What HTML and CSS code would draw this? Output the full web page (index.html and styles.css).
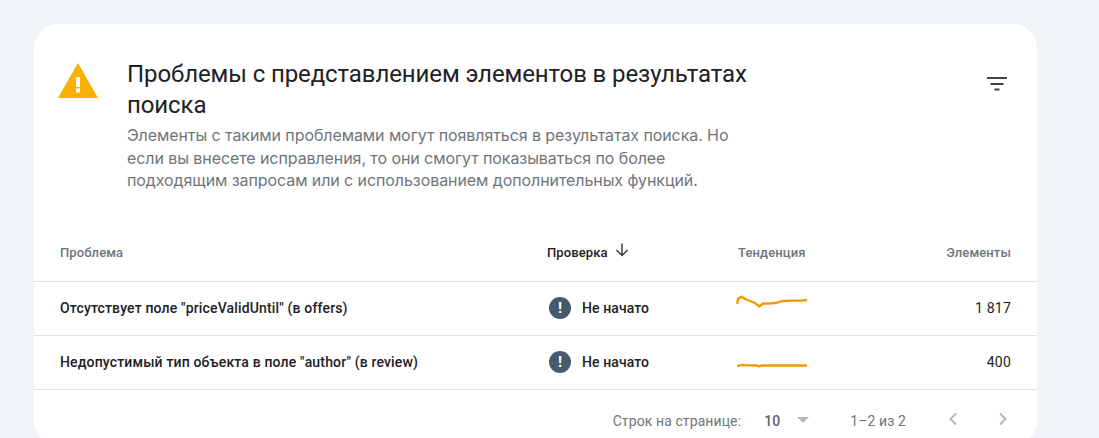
FILE: index.html
```html
<!DOCTYPE html>
<html lang="ru">
<head>
    <meta charset="UTF-8">
    <title>Проблемы с представлением элементов</title>
    <link rel="stylesheet" href="styles.css">
</head>
<body>
    <div class="card">
        <div class="card-header">
            <svg class="warn-icon" width="40" height="35" viewBox="0 0 40 35">
                <path d="M20 0 L40 35 L0 35 Z" fill="#f9b000"/>
                <rect x="18" y="14" width="4" height="10" fill="#fff"/>
                <rect x="18" y="25.500" width="4" height="4" fill="#fff"/>
            </svg>
            <div class="header-text">
                <h1>Проблемы с представлением элементов в результатах поиска</h1>
                <p>Элементы с такими проблемами могут появляться в результатах поиска. Но если вы внесете исправления, то они смогут показываться по более подходящим запросам или с использованием дополнительных функций.</p>
            </div>
            <svg class="filter-icon" width="20" height="14" viewBox="0 0 20 14">
                <rect x="0" y="0" width="20" height="2" fill="#444"/>
                <rect x="3.500" y="6" width="13" height="2" fill="#444"/>
                <rect x="7.500" y="11.500" width="5" height="2" fill="#444"/>
            </svg>
        </div>

        <div class="row head-row">
            <div>Проблема</div>
            <div class="sorted">Проверка
                <svg width="14" height="14" viewBox="0 0 14 14"><path d="M7 .5 V12.500 M1.500 7 L7 12.500 L12.500 7" fill="none" stroke="#3c4043" stroke-width="1.500"/></svg>
            </div>
            <div>Тенденция</div>
            <div class="num">Элементы</div>
        </div>

        <div class="row item-row">
            <div class="name">Отсутствует поле "priceValidUntil" (в offers)</div>
            <div class="status">
                <span class="status-icon">!</span>
                Не начато
            </div>
            <div class="trend">
                <svg width="72" height="32" viewBox="0 0 72 32"><polyline points="1.300,12 2,7 5.700,4.700 9,7 14,9 19,11 23.300,14.500 27,11.500 32,11.700 39,11 47,9 57,8.700 67,8.700 69,7.700 71,8.700" fill="none" stroke="#f29900" stroke-width="2.300"/></svg>
            </div>
            <div class="num">1 817</div>
        </div>

        <div class="row item-row">
            <div class="name">Недопустимый тип объекта в поле "author" (в review)</div>
            <div class="status">
                <span class="status-icon">!</span>
                Не начато
            </div>
            <div class="trend">
                <svg width="72" height="20" viewBox="0 0 72 20"><polyline points="1.300,14.200 5.700,12.800 9,13.200 20.700,13.500 23.300,14.500 25.700,13.500 71,13.500" fill="none" stroke="#f29900" stroke-width="2.300"/></svg>
            </div>
            <div class="num">400</div>
        </div>

        <div class="pager">
            <span>Строк на странице:</span>
            <span class="page-size">10</span>
            <span class="caret"></span>
            <span class="range">1–2 из 2</span>
            <svg class="pager-arrow" width="10" height="14" viewBox="0 0 10 14"><path d="M8 1.500 L2.500 7 L8 12.500" fill="none" stroke="#b5b7ba" stroke-width="2"/></svg>
            <svg class="pager-arrow next" width="10" height="14" viewBox="0 0 10 14"><path d="M2 1.500 L7.500 7 L2 12.500" fill="none" stroke="#b5b7ba" stroke-width="2"/></svg>
        </div>
    </div>
</body>
</html>
```

FILE: styles.css
```css
html, body {
    margin: 0;
    height: 438px;
    overflow: hidden;
}
body {
    font-family: Roboto, Arial, sans-serif;
    background-color: #f0f4f9;
    color: #202124;
    padding: 24px 62px 0 34px;
    box-sizing: border-box;
}
.card {
    background: white;
    border-radius: 24px;
    height: 421px;
}
.card-header {
    display: flex;
    align-items: flex-start;
    padding: 35px 30px 0 24px;
    height: 181px;
    box-sizing: border-box;
}
.warn-icon {
    margin-top: 4px;
    flex: none;
}
.header-text {
    width: 625px;
    margin-left: 29px;
}
h1 {
    font-size: 24px;
    line-height: 31px;
    font-weight: 400;
    letter-spacing: -0.1px;
    margin: 0;
}
.header-text p {
    font-family: Inter, Roboto, sans-serif;
    font-size: 16px;
    line-height: 22.500px;
    letter-spacing: -0.08px;
    color: #70757a;
    margin: 3px 0 0;
}
.filter-icon {
    margin-left: auto;
    margin-top: 18px;
}
.row {
    display: grid;
    grid-template-columns: 487px 191px 1fr 100px;
    align-items: center;
    padding: 0 26px;
    border-bottom: 1px solid #e0e0e0;
    font-size: 14px;
}
.head-row {
    height: 77px;
    box-sizing: border-box;
    padding-top: 18px;
    color: #70757a;
    font-weight: 500;
    font-size: 13px;
    letter-spacing: 0.1px;
}
.sorted {
    color: #202124;
    display: flex;
    align-items: center;
    gap: 7px;
}
.sorted svg {
    margin-top: -4px;
}
.item-row {
    height: 54px;
    box-sizing: border-box;
    padding-bottom: 2px;
    font-weight: 500;
}
.name {
    letter-spacing: 0.16px;
}
.num {
    text-align: right;
}
.item-row .num {
    font-weight: 400;
    letter-spacing: 0.2px;
}
.status {
    display: flex;
    align-items: center;
    gap: 11px;
    font-size: 14px;
    letter-spacing: 0.1px;
    padding-left: 2px;
}
.status-icon {
    width: 22px;
    height: 22px;
    border-radius: 50%;
    background: #455a6b;
    color: white;
    font-weight: 700;
    font-size: 15px;
    line-height: 22px;
    text-align: center;
}
.trend svg {
    display: block;
    margin-left: -2px;
}
.pager {
    display: flex;
    align-items: center;
    height: 62px;
    padding-right: 29px;
    justify-content: flex-end;
    font-size: 14px;
    letter-spacing: 0.1px;
    color: #70757a;
}
.page-size {
    margin-left: 23px;
    font-weight: 500;
    color: #5f6368;
}
.caret {
    margin-left: 17px;
    margin-bottom: 2px;
    border-left: 6px solid transparent;
    border-right: 6px solid transparent;
    border-top: 6px solid #b5b7ba;
}
.range {
    margin-left: 41px;
    margin-right: 42px;
}
.pager-arrow {
    margin-bottom: 4px;
}
.pager-arrow.next {
    margin-left: 40px;
}
```
